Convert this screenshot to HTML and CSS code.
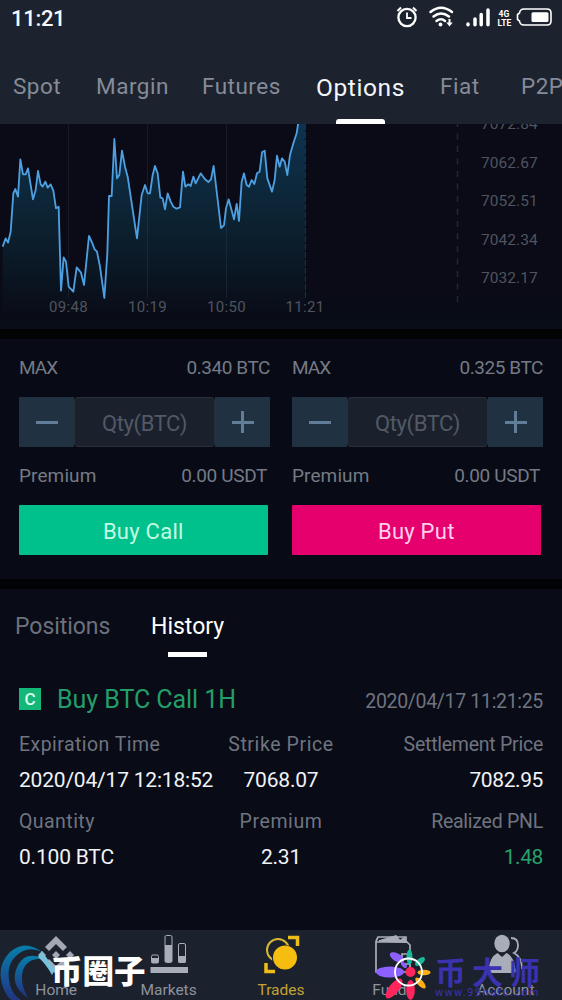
FILE: index.html
```html
<!DOCTYPE html>
<html lang="en">
<head>
<meta charset="utf-8">
<title>Options</title>
<link rel="stylesheet" href="styles.css">
</head>
<body>
<div class="app">
  <header class="top">
    <div class="status">
      <span class="clock">11:21</span>
      <svg class="status-icons" viewBox="394 0 168 36" width="168" height="36" fill="none" stroke="#fff">
        <circle cx="407" cy="17.5" r="8.6" stroke-width="2.3"/>
        <path d="M407 12.5v5.5h4.5" stroke-width="1.8"/>
        <path d="M397.500 11l3.500-3.500M416.500 11l-3.500-3.500" stroke-width="2"/>
        <path d="M430.500 12q10.500-8.500 21.500 0M433.500 16.500q7.500-6 15.500 0M436.500 21q4.500-3.500 8.500 0" stroke-width="2.5" stroke-linecap="round"/>
        <circle cx="440.500" cy="24.500" r="1.900" fill="#fff" stroke="none"/>
        <path d="M449.500 19v4.500" stroke-width="2"/>
        <path d="M446.300 22.500h6.400l-3.200 4z" fill="#fff" stroke="none"/>
        <path d="M468 24v.700M475 19v5.700M481.200 14.500v10.200M488 10v14.700" stroke-width="3.500" stroke-linecap="round"/>
        <path d="M524 9h23q4 0 4 4v8q0 4-4 4h-23q-4 0-4.500-4l-2-1.500v-5l2-1.500q.5-4 4.500-4z" stroke-width="1.600"/>
        <rect x="531.500" y="12.200" width="17" height="9.800" rx="1.500" fill="#fff" stroke="none"/>
        <g class="lte" stroke="none"><text x="498.500" y="16.500">4G</text><text x="497.500" y="26.300">LTE</text></g>
      </svg>
    </div>
    <nav class="tabs">
      <a class="t-spot">Spot</a><a class="t-margin">Margin</a><a class="t-futures">Futures</a><a class="t-options on">Options</a><a class="t-fiat">Fiat</a><a class="t-p2p">P2P</a>
    </nav>
  </header>

  <section class="chart">
    <svg viewBox="0 124 562 205" width="562" height="205">
      <defs>
        <linearGradient id="area" x1="0" y1="12" x2="0" y2="600" gradientUnits="userSpaceOnUse">
          <stop offset="0" stop-color="#0e3350"/>
          <stop offset=".5" stop-color="#0c2231"/>
          <stop offset="1" stop-color="#090b16"/>
        </linearGradient>
      </defs>
      <g transform="translate(0 120) scale(.33333)">
        <path fill="url(#area)" d="M8 380L17 355L24 368L32 335L40 220L46 207L54 230L61 118L69 163L77 163L84 145L92 195L99 238L107 210L114 153L122 193L128 200L136 185L143 203L152 193L160 212L168 265L176 260L183 512L191 412L198 425L206 500L220 515L230 442L243 458L252 495L267 348L275 365L284 388L291 395L300 440L313 534L322 400L327 228L335 228L343 57L351 175L358 165L366 92L375 140L383 170L411 355L425 225L435 195L443 220L450 220L458 165L465 138L473 160L481 232L488 235L495 268L503 220L512 245L520 260L530 266L540 262L549 155L556 200L565 193L572 198L580 170L587 190L602 160L615 178L625 186L633 178L641 138L663 324L672 316L678 265L686 238L702 298L710 252L717 303L725 185L732 160L740 195L747 200L755 180L763 192L771 160L779 155L786 97L794 92L802 175L816 215L824 180L831 107L839 140L846 115L854 125L862 165L870 105L880 70L890 40L896 0H915V600H8Z"/>
        <path fill="none" stroke="#4d9fe0" stroke-width="5.500" stroke-linejoin="round" d="M8 380L17 355L24 368L32 335L40 220L46 207L54 230L61 118L69 163L77 163L84 145L92 195L99 238L107 210L114 153L122 193L128 200L136 185L143 203L152 193L160 212L168 265L176 260L183 512L191 412L198 425L206 500L220 515L230 442L243 458L252 495L267 348L275 365L284 388L291 395L300 440L313 534L322 400L327 228L335 228L343 57L351 175L358 165L366 92L375 140L383 170L411 355L425 225L435 195L443 220L450 220L458 165L465 138L473 160L481 232L488 235L495 268L503 220L512 245L520 260L530 266L540 262L549 155L556 200L565 193L572 198L580 170L587 190L602 160L615 178L625 186L633 178L641 138L663 324L672 316L678 265L686 238L702 298L710 252L717 303L725 185L732 160L740 195L747 200L755 180L763 192L771 160L779 155L786 97L794 92L802 175L816 215L824 180L831 107L839 140L846 115L854 125L862 165L870 105L880 70L890 40L896 0"/>
      </g>
      <path d="M68.500 124v174M147.500 124v174M226.500 124v174" stroke="#667b93" stroke-opacity=".15"/>
      <path d="M305.500 124v176" stroke="#355166" stroke-opacity=".5" stroke-dasharray="6 2"/>
      <path d="M457.500 121v183" stroke="#232732" stroke-width="1.500" stroke-dasharray="6 6.500"/>
      <g class="axis" text-anchor="middle">
        <text x="68.500" y="312">09:48</text><text x="147.500" y="312">10:19</text><text x="226.500" y="312">10:50</text><text x="305" y="312">11:21</text>
      </g>
      <g class="axis price">
        <text x="481" y="129">7072.84</text><text x="481" y="167.500">7062.67</text><text x="481" y="206">7052.51</text><text x="481" y="244.500">7042.34</text><text x="481" y="282.500">7032.17</text>
      </g>
    </svg>
  </section>

  <section class="order">
    <div class="side">
      <div class="row"><span class="w-max">MAX</span><span class="w-btc">0.340 BTC</span></div>
      <div class="qty"><i class="step minus"></i><span class="field">Qty(BTC)</span><i class="step plus"></i></div>
      <div class="row short"><span class="w-prem">Premium</span><span class="w-usdt">0.00 USDT</span></div>
      <div class="buy call">Buy Call</div>
    </div>
    <div class="side">
      <div class="row"><span class="w-max">MAX</span><span class="w-btc">0.325 BTC</span></div>
      <div class="qty"><i class="step minus"></i><span class="field">Qty(BTC)</span><i class="step plus"></i></div>
      <div class="row short"><span class="w-prem">Premium</span><span class="w-usdt">0.00 USDT</span></div>
      <div class="buy put">Buy Put</div>
    </div>
  </section>

  <section class="history">
    <div class="subtabs"><span class="s-pos">Positions</span><span class="s-hist">History</span></div>
    <div class="trade-head"><i class="badge">C</i><span class="trade-name">Buy BTC Call 1H</span><span class="trade-date">2020/04/17 11:21:25</span></div>
    <div class="details">
      <div class="cell"><span class="lab">Expiration Time</span><span class="val">2020/04/17 12:18:52</span></div>
      <div class="cell mid"><span class="lab">Strike Price</span><span class="val">7068.07</span></div>
      <div class="cell end"><span class="lab">Settlement Price</span><span class="val">7082.95</span></div>
      <div class="cell"><span class="lab">Quantity</span><span class="val">0.100 BTC</span></div>
      <div class="cell mid"><span class="lab">Premium</span><span class="val">2.31</span></div>
      <div class="cell end"><span class="lab">Realized PNL</span><span class="val gain">1.48</span></div>
    </div>
  </section>

  <footer class="nav">
    <div class="item">
      <svg viewBox="0 0 50 46" width="50" height="46" fill="#a3a8b4"><path d="M25 6l11 11-4 4-7-7-7 7-4-4zM25 21l4 4-4 4-4-4zM11 21l4 4-4 4-4-4zM39 21l4 4-4 4-4-4zM14 33l4-4 7 7 7-7 4 4-11 11z"/></svg>
      <span>Home</span>
    </div>
    <div class="item">
      <svg viewBox="0 0 50 46" width="50" height="46" fill="#a9adb9"><path d="M6.500 37h37.500v6H6.500zM7.500 28h7v5h-7zM21 15h7v17h-7zM34.500 26h7v7h-7z"/><g fill="none" stroke="#a9adb9"><rect x="7.500" y="25" width="7" height="8" rx="1.500"/><rect x="21" y="5.500" width="7" height="27" rx="1.500"/><rect x="34.500" y="13.500" width="7" height="19" rx="1.500"/></g></svg>
      <span>Markets</span>
    </div>
    <div class="item active">
      <svg viewBox="0 0 50 46" width="50" height="46"><circle cx="22" cy="20" r="11" fill="none" stroke="#d8b633" stroke-width="2"/><circle cx="29" cy="28" r="13" fill="#1d222d"/><circle cx="29" cy="27.500" r="12" fill="#f4bd10"/><path d="M32 7.500h9.500V16M10 33v8.500h9" fill="none" stroke="#efbd17" stroke-width="3.500"/></svg>
      <span>Trades</span>
    </div>
    <div class="item">
      <svg viewBox="0 0 50 46" width="50" height="46" fill="none" stroke="#a9adb9" stroke-width="1.700"><path d="M8 11l2-4h28v6M8 11v31h34V15l-3-3H8zM34 24h8v10h-8z"/><path d="M11 11l17-5 4 5 4-3 2 4z" fill="#a9adb9"/></svg>
      <span>Funds</span>
    </div>
    <div class="item">
      <svg viewBox="0 0 50 46" width="50" height="46" fill="#a9adb9"><ellipse cx="21" cy="13.500" rx="7.700" ry="8.700"/><path d="M9 43q-2 0-1.500-3 1-13 9-17l4.500 4 4.500-4q8 4 9 17 .5 3-1.500 3z"/><path d="M30 8q7 0 7 7 0 6-4 8 8 4 8 16" fill="none" stroke="#a9adb9" stroke-width="1.800"/></svg>
      <span>Account</span>
    </div>

    <div class="mark left">
      <svg viewBox="0 0 60 62" width="60" height="62"><defs><linearGradient id="wave" x1="0" y1="0" x2="0" y2="1"><stop offset="0" stop-color="#087dab"/><stop offset="1" stop-color="#22307e"/></linearGradient></defs><path d="M42 10Q25-3 10 10Q-6 26 5 50Q12 65 32 61Q15 60 10 43Q4 19 23 9Q32 5 42 10z" fill="url(#wave)"/><path d="M45 17Q26 8 18 23Q8 43 28 56Q19 40 23 28Q28 15 45 17z" fill="url(#wave)"/><path d="M38 15l4-6 13 19-3 5q-6-11-14-18z" fill="#78c1dc"/></svg>
      <span>币圈子</span>
    </div>
    <div class="mark right">
      <svg viewBox="0 0 56 52" width="56" height="52">
        <g fill="#8c61ff"><ellipse cx="15" cy="24" rx="14" ry="5.500"/><ellipse cx="22" cy="9.500" rx="8" ry="4" transform="rotate(30 22 9.500)"/><ellipse cx="29" cy="17" rx="3.500" ry="2" transform="rotate(45 29 17)"/></g>
        <g fill="#ff265e"><ellipse cx="19" cy="40.500" rx="12" ry="5" transform="rotate(-52 19 40.500)"/><ellipse cx="35.500" cy="42" rx="4.300" ry="10"/><circle cx="35.500" cy="24" r="5"/></g>
        <g fill="#18b89a"><ellipse cx="34.500" cy="9" rx="3" ry="7.500"/><ellipse cx="45" cy="13.500" rx="6" ry="3" transform="rotate(-40 45 13.500)"/></g>
        <g fill="#ffaf16"><ellipse cx="49" cy="24.500" rx="6.500" ry="2.700"/><ellipse cx="45.500" cy="35" rx="7" ry="3" transform="rotate(48 45.500 35)"/></g>
        <circle cx="33.500" cy="24" r="13.500" fill="none" stroke="#fff" stroke-width="1.800"/>
      </svg>
      <div class="brand"><b>币大师</b><small>www.99hufu.com</small></div>
    </div>
  </footer>
</div>
</body>
</html>
```
FILE: styles.css
```css
* { box-sizing: border-box; }
body { margin: 0; background: #080b15; font-family: Roboto, "Noto Sans CJK SC", sans-serif; color: #6f7480; }
i { font-style: normal; }
span, a { white-space: nowrap; }
.app { width: 562px; height: 1000px; display: flex; flex-direction: column; overflow: hidden; }
.top { height: 124px; flex: none; background: #1c232f; display: flex; flex-direction: column; }
.status { height: 36px; display: flex; justify-content: space-between; }
.clock { color: #f5f8fc; font-size: 22px; font-weight: 500; line-height: 37px; padding-left: 11px; letter-spacing: -.3px; }
.lte { fill: #fff; font: bold 8.500px Roboto, sans-serif; }
.tabs { height: 88px; display: flex; font-size: 22.5px; line-height: 100px; color: #858b98; }
.tabs a { flex: none; letter-spacing: .5px; }
.t-spot { width: 83px; margin-left: 13px; }
.t-margin { width: 106px; }
.t-futures { width: 114px; }
.t-options { width: 124px; }
.t-fiat { width: 81px; }
.tabs .on { color: #f4f6fa; font-size: 24.5px; line-height: 104px; position: relative; letter-spacing: .6px; }
.on::after { content: ""; position: absolute; left: 20px; bottom: 0; width: 49px; height: 5px; background: #fff; border-radius: 3px 3px 0 0; }
.chart { height: 205px; flex: none; background: linear-gradient(#0a0b16 80%, #080d18); }
.chart svg { display: block; }
.axis { fill: #4f545e; font: 15px Roboto, sans-serif; letter-spacing: .3px; }
.price { font-size: 15.500px; letter-spacing: .05px; }
.order { height: 260px; flex: none; border-top: 10px solid #020305; border-bottom: 10px solid #020305; display: grid; grid-template-columns: 251px 251px; column-gap: 22px; padding: 8px 19px 0; }
.side { display: flex; flex-direction: column; }
.row { height: 42px; line-height: 42px; display: flex; justify-content: space-between; font-size: 19px; color: #747a86; }
.row + .qty { margin-top: 8px; }
.w-max { letter-spacing: -1px; }
.w-btc { letter-spacing: -.45px; }
.w-usdt { letter-spacing: -.35px; }
.w-prem { letter-spacing: .1px; }
.qty { height: 50px; display: flex; }
.step { width: 55px; background: #203141; display: grid; place-items: center; }
.step::before, .step::after { content: ""; grid-area: 1 / 1; width: 22px; height: 3px; background: #617d98; }
.plus::after { width: 3px; height: 22px; }
.field { flex: 1; background: #1b212c; border: 1px solid #2a303a; border-radius: 4px; text-align: center; line-height: 51px; font-size: 22px; letter-spacing: -.4px; color: #525966; }
.short { width: 248px; margin-top: 8px; }
.buy { width: 248.500px; height: 50px; margin-top: 8px; text-align: center; line-height: 53px; font-size: 22px; letter-spacing: .25px; color: #c6fbe2; border-radius: 1px; }
.call { background: #00c18b; }
.put { background: #e5006d; color: #ffd0ec; }
.history { height: 341px; flex: none; background: #090b16; padding: 12px 19px 0; }
.subtabs { height: 68px; display: flex; font-size: 23px; line-height: 51px; margin-left: -4px; }
.s-pos { width: 136px; letter-spacing: -.05px; color: #6c717d; }
.s-hist { color: #fff; position: relative; }
.s-hist::after { content: ""; position: absolute; left: 17px; top: 51px; width: 39px; height: 5px; background: #fff; }
.trade-head { height: 58px; display: flex; align-items: center; padding-top: 2px; }
.badge { width: 22px; height: 22px; background: #13b777; color: #ddffed; font-size: 17px; font-weight: 500; line-height: 22px; text-align: center; }
.trade-name { margin-left: 16px; padding-top: 2px; color: #249e69; font-size: 25px; line-height: 54px; letter-spacing: -.05px; }
.trade-date { margin-left: auto; padding-top: 5px; font-size: 19.500px; letter-spacing: -.32px; }
.details { display: grid; grid-template-columns: 195px 134px 195px; row-gap: 7px; }
.cell { height: 70px; display: flex; flex-direction: column; }
.mid { align-items: center; }
.end { align-items: flex-end; }
.lab { height: 35px; line-height: 35px; font-size: 19.500px; letter-spacing: .45px; }
.mid .lab { letter-spacing: .6px; }
.end .lab { letter-spacing: -.25px; }
.val { line-height: 36px; font-size: 21px; letter-spacing: -.2px; color: #f0f3f7; }
.end .val { letter-spacing: -.4px; }
.val.gain { color: #25a36c; }
.nav { height: 70px; flex: none; background: #1b222d; display: grid; grid-template-columns: repeat(5, 1fr); position: relative; }
.item { display: flex; flex-direction: column; align-items: center; font-size: 15.500px; line-height: 28px; color: #8e939f; }
.active { color: #c4a334; }
.item svg { flex: none; }
.mark { position: absolute; display: flex; }
.left { left: 0; top: 12px; }
.left span { position: absolute; left: 51px; top: 5px; font: 900 31.500px/44px "Noto Sans CJK SC", sans-serif; color: #fff; }
.right { left: 375px; top: 18px; }
.brand { display: flex; flex-direction: column; margin: 6px 0 0 4px; color: #3a32af; white-space: nowrap; }
.brand b { font: 700 31px/34px "Noto Sans CJK SC", sans-serif; letter-spacing: 6px; }
.brand small { font: 10px/10px "DejaVu Sans", sans-serif; letter-spacing: 1.300px; }
```
